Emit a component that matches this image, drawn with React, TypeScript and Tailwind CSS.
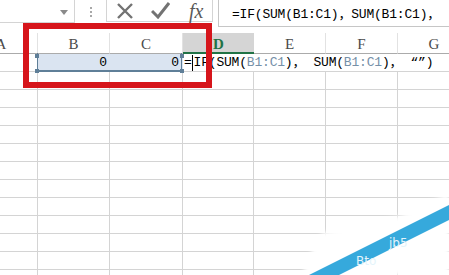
import React from 'react'

const colWidths = ['w-[73px]', 'w-[72px]', 'w-[73px]', 'w-[71px]', 'w-[72px]', 'w-[72px]', 'w-[73px]']
const colNames = ['A', 'B', 'C', 'D', 'E', 'F', 'G']

const mono = { fontFamily: '"Liberation Mono", "Noto Sans CJK SC", monospace' }

function Toolbar() {
  return (
    <div className="flex h-[27px] items-start bg-white">
      {/* name box */}
      <div className="relative h-[23px] w-[75px] shrink-0 border-r border-b border-[#d4d4d4] bg-white">
        <svg className="absolute left-[60px] top-[10px]" width="8" height="5" viewBox="0 0 8 5">
          <path d="M0 0 L8 0 L4 5 Z" fill="#8a8a8a" />
        </svg>
      </div>
      <div className="flex h-[23px] w-[31px] shrink-0 flex-col items-center justify-center gap-[2px]">
        <span className="h-[2px] w-[2px] bg-[#a8a8a8]" />
        <span className="h-[2px] w-[2px] bg-[#a8a8a8]" />
        <span className="h-[2px] w-[2px] bg-[#a8a8a8]" />
      </div>
      {/* cancel / enter / fx */}
      <div className="flex h-[22px] w-[107px] shrink-0 items-center border-x border-b border-[#d4d4d4] bg-white">
        <svg className="ml-[9px]" width="18" height="18" viewBox="0 0 18 18">
          <path d="M2 2 L16 16 M16 2 L2 16" stroke="#737373" strokeWidth="2.4" />
        </svg>
        <svg className="ml-[17px]" width="19" height="17" viewBox="0 0 19 17">
          <path d="M1 9 L7 15 L18 1" stroke="#737373" strokeWidth="3" fill="none" />
        </svg>
        <span
          className="ml-[19px] text-[20px] italic leading-none text-[#5a5a5a]"
          style={{ fontFamily: '"Liberation Serif", serif' }}
        >
          fx
        </span>
      </div>
      {/* formula input */}
      <div
        className="ml-[5px] flex h-[27px] flex-1 items-center overflow-hidden whitespace-nowrap border-l border-b border-[#c6c6c6] bg-white pl-[13px] pt-[4px] text-[13px] tracking-[-0.2px] text-black"
        style={mono}
      >
        =IF(SUM(B1:C1)，SUM(B1:C1)，
      </div>
    </div>
  )
}

function HeaderRow() {
  return (
    <div className="-ml-[35px] flex h-[21px]">
      {colNames.map((c, i) =>
        c === 'D' ? (
          <div
            key={c}
            className={`${colWidths[i]} flex shrink-0 items-center justify-center border-b-2 border-[#217346] bg-[#d5d5d5] pt-[3px] text-[15px] font-bold text-[#217346]`}
            style={{ fontFamily: '"Liberation Serif", serif' }}
          >
            {c}
          </div>
        ) : (
          <div
            key={c}
            className={`${colWidths[i]} flex shrink-0 items-center justify-center border-r border-b border-r-[#e2e2e2] border-b-[#ababab] pt-[3px] text-[15px] text-[#4a4a4a]`}
            style={{ fontFamily: '"Liberation Serif", serif' }}
          >
            {c}
          </div>
        ),
      )}
    </div>
  )
}

function Handle({ className }: { className: string }) {
  return <span className={`absolute h-[4px] w-[4px] bg-[#5f7f98] ${className}`} />
}

function FirstRow() {
  const ref = 'text-[#7690a8]'
  return (
    <div className="-ml-[35px] flex h-[18px] text-[13px] text-black" style={mono}>
      <div className="w-[73px] shrink-0 border-r border-b border-[#d4d4d4]" />
      <div className="relative flex w-[145px] shrink-0 bg-[#dae4f1]">
        <div className="flex w-[72px] items-center justify-end pr-[3px]">0</div>
        <div className="flex w-[73px] items-center justify-end pr-[4px]">0</div>
        <div className="absolute -left-[1px] -top-[1px] h-[19px] w-[145px] border-x border-b-2 border-[#5f7f98]" />
        <Handle className="-left-[3px] top-0" />
        <Handle className="-left-[3px] bottom-[-1px]" />
        <Handle className="right-[-1px] top-0" />
        <Handle className="right-[-1px] bottom-[-1px]" />
      </div>
      <div className="flex w-[288px] shrink-0 items-center overflow-visible whitespace-nowrap border-b border-[#d4d4d4] bg-white pl-[1px] tracking-[-0.2px]">
        =<span className="mx-[0.5px] inline-block h-[16px] w-px bg-black" />IF(SUM(<span className={ref}>B1:C1</span>)
        <span className="inline-block w-[21px]">，</span>SUM(<span className={ref}>B1:C1</span>)
        <span className="inline-block w-[21px]">，</span>“”)
      </div>
    </div>
  )
}

function EmptyRow() {
  return (
    <div className="-ml-[35px] flex h-[18px]">
      {colWidths.map((w, i) => (
        <div key={i} className={`${w} shrink-0 border-r border-b border-[#d4d4d4] bg-white`} />
      ))}
    </div>
  )
}

function Watermark() {
  return (
    <svg className="pointer-events-none absolute right-0 bottom-0" width="149" height="90" viewBox="0 0 149 90">
      <defs>
        <filter id="soft" x="-20%" y="-20%" width="140%" height="140%">
          <feGaussianBlur stdDeviation="2" />
        </filter>
      </defs>
      <polygon points="2,90 12,65 22,48 100,31 149,8 149,90" fill="#ffffff" filter="url(#soft)" />
      <polygon points="9,90 149,20 149,35 39,90" fill="#36a9dc" />
      <text x="56" y="80" fill="#e4f4fb" fontSize="12" fontFamily="DejaVu Sans, sans-serif">Bto</text>
      <text x="89" y="62" fill="#e4f4fb" fontSize="12" fontFamily="DejaVu Sans, sans-serif">jb5</text>
    </svg>
  )
}

export default function App() {
  return (
    <div className="relative h-[275px] w-[449px] overflow-hidden bg-white">
      <Toolbar />
      <div className="h-[6px] bg-white" />
      <HeaderRow />
      <FirstRow />
      {Array.from({ length: 12 }).map((_, i) => (
        <EmptyRow key={i} />
      ))}
      {/* red annotation box */}
      <div className="pointer-events-none absolute left-[23px] top-[23px] h-[65px] w-[189px] border-[6px] border-[#d6151b]" />
      <Watermark />
    </div>
  )
}
